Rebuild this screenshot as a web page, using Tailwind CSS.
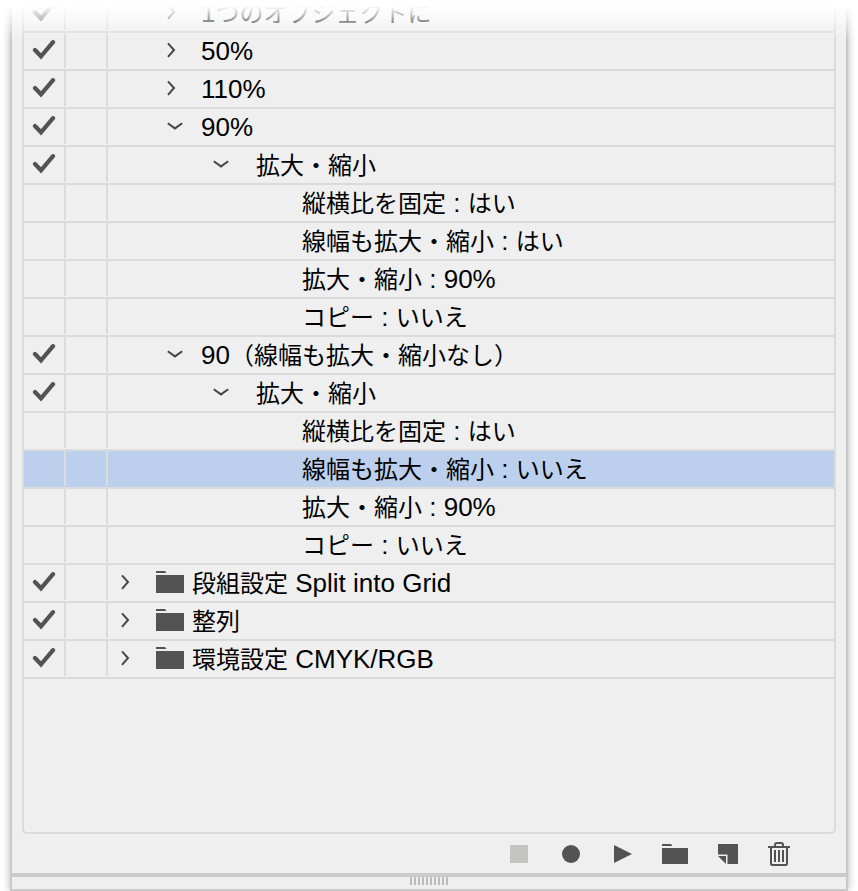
<!DOCTYPE html>
<html lang="ja">
<head>
  <meta charset="UTF-8" />
  <meta name="viewport" content="width=device-width, initial-scale=1.0" />
  <title>アクション</title>
  <script src="https://cdn.jsdelivr.net/npm/@tailwindcss/browser@4"></script>
  <style>
    body {
      font-family: 'Liberation Sans', 'Noto Sans CJK JP', sans-serif;
    }
  </style>
</head>
<body class="bg-white text-black">
  <svg class="hidden">
    <symbol id="check" viewBox="0 0 24 20"><path d="M3 10 9 16.3 21 2.2" fill="none" stroke="#535353" stroke-width="4.2" stroke-linecap="round"/></symbol>
    <symbol id="closed" viewBox="0 0 16 16"><path d="M1 1.4 7 8 1 14.8" fill="none" stroke="#474747" stroke-width="2"/></symbol>
    <symbol id="open" viewBox="0 0 16 16"><path d="M.8 5.2 8 10.4 15.2 5.2" fill="none" stroke="#474747" stroke-width="2"/></symbol>
    <symbol id="folder" viewBox="0 0 28 22"><path d="M0 0H9L10.5 2H0ZM0 4H28V22H0Z" fill="#535353"/></symbol>
  </svg>

  <div class="relative flex min-h-screen overflow-hidden px-[10px]">
    <main class="flex flex-1 flex-col border-x-2 border-b-2 border-[#cacaca] bg-[#efefef] shadow-[0_0_8px_rgba(0,0,0,0.3)]">
      <ul id="actions" class="mx-[10px] -mt-[5px] flex-1 rounded-b-[5px] border-x-2 border-b-2 border-[#dbdbdb]"></ul>

      <div class="flex h-[39px] justify-end pr-[41px]">
        <button type="button" aria-label="停止" class="flex w-[52px] items-center justify-center" disabled>
          <svg width="18" height="18"><path d="M0 0H18V18H0Z" fill="#c5c5c4"/></svg>
        </button>
        <button type="button" aria-label="記録" class="flex w-[52px] items-center justify-center">
          <svg width="18" height="18"><circle cx="9" cy="9" r="9" fill="#535353"/></svg>
        </button>
        <button type="button" aria-label="再生" class="flex w-[52px] items-center justify-center">
          <svg width="18" height="18"><path d="M0 0 18 9 0 18Z" fill="#535353"/></svg>
        </button>
        <button type="button" aria-label="新規セット" class="flex w-[52px] items-center justify-center">
          <svg width="26" height="20"><path d="M0 0H9L10.5 2H0ZM0 4H26V20H0Z" fill="#535353"/></svg>
        </button>
        <button type="button" aria-label="新規アクション" class="flex w-[52px] items-center justify-center">
          <svg width="22" height="20"><path d="M2 0H22V20H11.5V10.5H2Z" fill="#535353"/><path d="M2 12H10V20Z" fill="#535353"/></svg>
        </button>
        <button type="button" aria-label="削除" class="flex w-[52px] items-center justify-center">
          <svg width="22" height="24" fill="none" stroke="#535353">
            <path d="M0 5H22" stroke-width="2"/>
            <path d="M7 4.5V3Q7 1 9 1H13Q15 1 15 3V4.5" stroke-width="2"/>
            <path d="M3 5V21.5Q3 23 4.5 23H17.5Q19 23 19 21.5V5" stroke-width="2"/>
            <path d="M7 8V20M11 8V20M15 8V20" stroke-width="2"/>
          </svg>
        </button>
      </div>

      <div class="flex h-4 justify-center border-t-4 border-[#cacaca]">
        <svg width="38" height="8"><path d="M1 0V8M5 0V8M9 0V8M13 0V8M17 0V8M21 0V8M25 0V8M29 0V8M33 0V8M37 0V8" stroke="#bcbcbc" stroke-width="2"/></svg>
      </div>
    </main>
    <div class="pointer-events-none absolute inset-x-0 top-0 h-10 bg-linear-to-b from-white from-15% to-white/0"></div>
  </div>

  <script>
    // level: 1 = set, 2 = action, 3 = command, 4 = setting
    const rows = [
      { level: 2, text: '1つのオブジェクトに', icon: 'closed' },
      { level: 2, text: '50%', icon: 'closed' },
      { level: 2, text: '110%', icon: 'closed' },
      { level: 2, text: '90%', icon: 'open' },
      { level: 3, text: '拡大・縮小', icon: 'open' },
      { level: 4, text: '縦横比を固定 : はい' },
      { level: 4, text: '線幅も拡大・縮小 : はい' },
      { level: 4, text: '拡大・縮小 : 90%' },
      { level: 4, text: 'コピー : いいえ' },
      { level: 2, text: '90（線幅も拡大・縮小なし）', icon: 'open' },
      { level: 3, text: '拡大・縮小', icon: 'open' },
      { level: 4, text: '縦横比を固定 : はい' },
      { level: 4, text: '線幅も拡大・縮小 : いいえ', selected: true },
      { level: 4, text: '拡大・縮小 : 90%' },
      { level: 4, text: 'コピー : いいえ' },
      { level: 1, text: '段組設定 Split into Grid', icon: 'closed' },
      { level: 1, text: '整列', icon: 'closed' },
      { level: 1, text: '環境設定 CMYK/RGB', icon: 'closed' },
    ];

    const indent = { 1: 'pl-[13px] gap-2', 2: 'pl-[59px] gap-[18px]', 3: 'pl-[105px] gap-[27px]', 4: 'pl-[194px]' };

    // latin runs are set a little larger than the kana and kanji
    const label = (text) => text.replace(/[ -~]+/g, '<span class="text-[26px] leading-none">$&</span>');

    document.getElementById('actions').innerHTML = rows.map((row, i) => `
      <li class="flex h-[38px] border-b-2 border-[#dbdbdb] ${row.selected ? 'bg-[#bccfec]' : ''}">
        <div class="mb-px flex w-[42px] shrink-0 border-r-2 border-[#dbdbdb]">
          ${row.icon ? `
          <label for="row${i}" class="grid flex-1 place-items-center pb-px">
            <input type="checkbox" id="row${i}" aria-labelledby="name${i}" class="peer col-start-1 row-start-1 h-5 w-6 appearance-none" checked>
            <svg class="pointer-events-none invisible col-start-1 row-start-1 h-5 w-6 peer-checked:visible"><use href="#check"/></svg>
          </label>` : ''}
        </div>
        <div class="mb-px w-[42px] shrink-0 border-r-2 border-[#dbdbdb]"></div>
        <div class="flex min-w-0 flex-1 items-center pb-0.5 ${indent[row.level]}">
          ${row.icon ? `<button type="button" aria-label="${row.icon === 'open' ? '閉じる' : '開く'}" class="shrink-0"><svg class="size-4"><use href="#${row.icon}"/></svg></button>` : ''}
          ${row.level === 1 ? '<svg class="ml-[11px] h-[22px] w-7 shrink-0"><use href="#folder"/></svg>' : ''}
          <span id="name${i}" class="mt-1 text-2xl leading-9 whitespace-nowrap">${label(row.text)}</span>
        </div>
      </li>`).join('');
  </script>
</body>
</html>
